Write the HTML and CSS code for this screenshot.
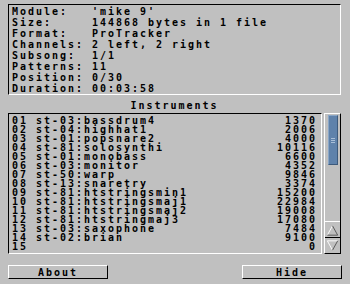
FILE: index.html
```html
<!DOCTYPE html>
<html lang="en">
<head>
    <meta charset="UTF-8">
    <title>Module Info</title>
    <link rel="stylesheet" href="styles.css">
</head>
<body>
    <div class="window">
        <!-- Module details -->
        <div class="info">
            <div class="info-row"><span class="label">Module:</span>'mike 9'</div>
            <div class="info-row"><span class="label">Size:</span>144868 bytes in 1 file</div>
            <div class="info-row"><span class="label">Format:</span>ProTracker</div>
            <div class="info-row"><span class="label">Channels:</span>2 left, 2 right</div>
            <div class="info-row"><span class="label">Subsong:</span>1/1</div>
            <div class="info-row"><span class="label">Patterns:</span>11</div>
            <div class="info-row"><span class="label">Position:</span>0/30</div>
            <div class="info-row"><span class="label">Duration:</span>00:03:58</div>
        </div>

        <div class="title">Instruments</div>

        <div class="list-area">
            <div class="list">
                <div class="row"><span>01 st-03:bassdrum4</span><span>1370</span></div>
                <div class="row"><span>02 st-04:highhat1</span><span>2006</span></div>
                <div class="row"><span>03 st-01:popsnare2</span><span>4000</span></div>
                <div class="row"><span>04 st-81:solosynthi</span><span>10116</span></div>
                <div class="row"><span>05 st-01:monobass</span><span>6600</span></div>
                <div class="row"><span>06 st-03:monitor</span><span>4352</span></div>
                <div class="row"><span>07 st-50:warp</span><span>9846</span></div>
                <div class="row"><span>08 st-13:snaretry</span><span>3374</span></div>
                <div class="row"><span>09 st-81:htstringsmin1</span><span>15200</span></div>
                <div class="row"><span>10 st-81:htstringsmaj1</span><span>22984</span></div>
                <div class="row"><span>11 st-81:htstringsmaj2</span><span>19008</span></div>
                <div class="row"><span>12 st-81:htstringmaj3</span><span>17080</span></div>
                <div class="row"><span>13 st-03:saxophone</span><span>7484</span></div>
                <div class="row"><span>14 st-02:brian</span><span>9100</span></div>
                <div class="row"><span>15</span><span>0</span></div>
            </div>

            <div class="scrollbar">
                <div class="track">
                    <div class="thumb"><div class="grip"></div></div>
                </div>
                <div class="arrow">
                    <svg width="16" height="14" viewBox="0 0 16 14">
                        <polyline points="2.5,12.5 8,2.5" fill="none" stroke="#ffffff"/>
                        <polyline points="8,2.5 13.5,12.5 2.5,12.5" fill="none" stroke="#555555"/>
                    </svg>
                </div>
                <div class="arrow">
                    <svg width="16" height="14" viewBox="0 0 16 14">
                        <polyline points="13.5,1.5 2.5,1.5 8,11.5" fill="none" stroke="#ffffff"/>
                        <polyline points="8,11.5 13.5,1.5" fill="none" stroke="#555555"/>
                    </svg>
                </div>
            </div>
        </div>

        <div class="buttons">
            <div class="button about">About</div>
            <div class="button hide">Hide</div>
        </div>
    </div>
</body>
</html>
```

FILE: styles.css
```css
body {
    margin: 0;
    background-color: #c0c0c0;
    color: #000000;
    font-family: "DejaVu Sans Mono", "Liberation Mono", monospace;
    font-weight: bold;
    font-size: 10px;
    letter-spacing: 1.98px;
}
.window {
    width: 350px;
    height: 284px;
    padding: 4px 0 0 8px;
    box-sizing: border-box;
}
.info {
    width: 333px;
    height: 91px;
    box-sizing: border-box;
    border-top: 1px solid #000000;
    border-left: 1px solid #000000;
    border-right: 1px solid #ffffff;
    border-bottom: 1px solid #ffffff;
    padding: 1px 0 0 3px;
}
.info-row {
    height: 11px;
    line-height: 11px;
    white-space: pre;
}
.label {
    display: inline-block;
    width: 80px;
}
.title {
    width: 333px;
    text-align: center;
    line-height: 11px;
    height: 11px;
    margin-top: 5px;
}
.list-area {
    display: flex;
    gap: 2px;
    margin-top: 2px;
    height: 141px;
}
.list {
    width: 314px;
    box-sizing: border-box;
    border-top: 1px solid #000000;
    border-left: 1px solid #000000;
    border-right: 1px solid #ffffff;
    border-bottom: 1px solid #ffffff;
    padding: 2px 4px 0 3px;
}
.row {
    display: flex;
    justify-content: space-between;
    height: 9px;
    line-height: 9px;
    white-space: pre;
}
.scrollbar {
    width: 17px;
    box-sizing: border-box;
    border-top: 1px solid #ffffff;
    border-left: 1px solid #ffffff;
    border-right: 1px solid #000000;
    border-bottom: 1px solid #000000;
    display: flex;
    flex-direction: column;
}
.track {
    flex: 1;
    padding: 1px 2px 0 3px;
}
.thumb {
    height: 50px;
    background-color: #5f82ab;
    border-right: 1px solid #3d5a7c;
    border-bottom: 1px solid #3d5a7c;
    border-top: 1px solid #8aa6c6;
    border-left: 1px solid #8aa6c6;
    box-sizing: border-box;
    display: flex;
    align-items: center;
    justify-content: center;
}
.grip {
    width: 4px;
    height: 5px;
    background: repeating-linear-gradient(#a9bfd8 0 1px, transparent 1px 2px);
}
.arrow {
    height: 16px;
    border-top: 1px solid #ffffff;
    box-sizing: border-box;
    display: flex;
    align-items: center;
    justify-content: center;
}
.arrow + .arrow {
    border-top: 1px solid #000000;
}
.buttons {
    display: flex;
    justify-content: space-between;
    width: 334px;
    margin-top: 11px;
}
.button {
    height: 14px;
    line-height: 13px;
    box-sizing: border-box;
    text-align: center;
    border-top: 1px solid #ffffff;
    border-left: 1px solid #ffffff;
    border-right: 1px solid #000000;
    border-bottom: 1px solid #000000;
}
.about {
    width: 100px;
}
.hide {
    width: 100px;
}
```
